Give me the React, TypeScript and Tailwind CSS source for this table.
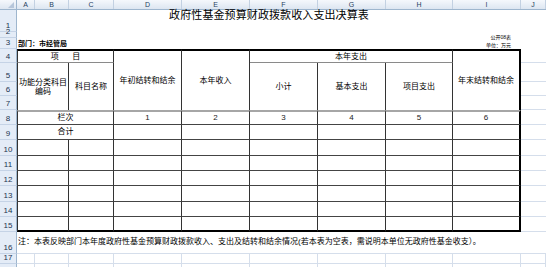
import React from "react";

const rowCls: Record<number, string> = {
  1: "row-[1]", 2: "row-[2]", 3: "row-[3]", 4: "row-[4]", 5: "row-[5]", 6: "row-[6]",
  7: "row-[7]", 8: "row-[8]", 9: "row-[9]", 10: "row-[10]", 11: "row-[11]", 12: "row-[12]",
  13: "row-[13]", 14: "row-[14]", 15: "row-[15]", 16: "row-[16]", 17: "row-[17]", 18: "row-[18]",
};
const colCls: Record<number, string> = {
  1: "col-[1]", 2: "col-[2]", 3: "col-[3]", 4: "col-[4]", 5: "col-[5]", 6: "col-[6]",
  7: "col-[7]", 8: "col-[8]", 9: "col-[9]", 10: "col-[10]", 11: "col-[11]",
};

const letters = ["A", "B", "C", "D", "E", "F", "G", "H", "I", "J"];

function Cell({ c, children }: { c: string; children?: React.ReactNode }) {
  return <div className={c}>{children}</div>;
}

export default function App() {
  const rows: number[] = [];
  for (let i = 1; i <= 18; i++) rows.push(i);

  const dataCols = [5, 6, 7, 8, 9, 10];
  const bodyRows = [10, 11, 12, 13, 14, 15];

  return (
    <div className="w-[546px] h-[267px] overflow-hidden bg-white text-black font-['Liberation_Sans','Noto_Sans_CJK_SC',sans-serif]">
      {/* column header */}
      <div className="grid h-[10px] grid-cols-[17px_18px_34px_45px_68px_68px_68px_68px_67px_68px_25px] bg-gradient-to-b from-[#f5f8fc] to-[#dde6f1] border-b border-b-[#9eb6ce]">
        <div className="relative border-r border-r-[#9eb6ce]">
          <div className="absolute right-[2px] bottom-[1px] w-0 h-0 border-l-[6px] border-l-transparent border-b-[6px] border-b-[#b6c6da]" />
        </div>
        {letters.map((l) => (
          <div
            key={l}
            className="flex items-center justify-center border-r border-r-[#c3d1e2] text-[7px] leading-none text-[#27415f]"
          >
            {l}
          </div>
        ))}
      </div>

      {/* body grid */}
      <div className="grid grid-cols-[17px_18px_34px_45px_68px_68px_68px_68px_67px_68px_25px] grid-rows-[22px_6px_11px_14px_19px_14px_14px_15px_15px_16px_15px_15px_16px_15px_15px_22px_10px_12px] text-[8px] leading-[10px]">
        {/* row headers */}
        {rows.map((r) => (
          <div
            key={"rh" + r}
            className={`col-[1] ${rowCls[r]} flex items-end justify-center bg-[#e4ecf7] border-r border-r-[#9eb6ce] border-b border-b-[#c5d3e6] pb-[1px] text-[8px] leading-[8px] text-[#22344f]`}
          >
            {r}
          </div>
        ))}

        {/* title */}
        <Cell c="col-[2/span_9] row-[1] flex justify-center items-start pt-[0px] text-[11px] leading-[11px] tracking-[0.1px]">
          政府性基金预算财政拨款收入支出决算表
        </Cell>

        {/* row 2 / 3 captions */}
        <Cell c="col-[10] row-[2] flex justify-end items-end pr-[10px] mb-[-2px] text-[5px] leading-[5px] whitespace-nowrap">
          公开08表
        </Cell>
        <Cell c="col-[2/span_4] row-[3] flex items-end pl-[1px] pb-[2px] text-[7px] leading-[7px] font-bold whitespace-nowrap">
          部门：市经管局
        </Cell>
        <Cell c="col-[10] row-[3] flex justify-end items-end pr-[10px] pb-[1px] text-[5px] leading-[5px] whitespace-nowrap">
          单位：万元
        </Cell>

        {/* header row 4 */}
        <Cell c="col-[2/span_3] row-[4] flex items-center justify-center border-t-2 border-t-black border-l border-l-[#333] border-r border-r-[#333] border-b border-b-[#8a8a8a] whitespace-pre">
          {"项      目"}
        </Cell>
        <Cell c="col-[5] row-[4/span_4] flex items-center justify-center border-t-2 border-t-black border-r border-r-[#333]">
          年初结转和结余
        </Cell>
        <Cell c="col-[6] row-[4/span_4] flex items-center justify-center border-t-2 border-t-black border-r border-r-[#333]">
          本年收入
        </Cell>
        <Cell c="col-[7/span_3] row-[4] flex items-center justify-center border-t-2 border-t-black border-r border-r-[#333] border-b border-b-[#8a8a8a]">
          本年支出
        </Cell>
        <Cell c="col-[10] row-[4/span_4] flex items-center justify-center border-t-2 border-t-black border-r-2 border-r-black">
          年末结转和结余
        </Cell>

        {/* header rows 5-7 */}
        <Cell c="col-[2/span_2] row-[5/span_3] flex flex-col items-center justify-center border-l border-l-[#333] border-r border-r-[#333] leading-[9px] pt-[1px]">
          <span>功能分类科目</span>
          <span>编码</span>
        </Cell>
        <Cell c="col-[4] row-[5/span_3] flex items-center justify-center border-r border-r-[#333]">
          科目名称
        </Cell>
        <Cell c="col-[7] row-[5/span_3] flex items-center justify-center border-r border-r-[#333]">
          小计
        </Cell>
        <Cell c="col-[8] row-[5/span_3] flex items-center justify-center border-r border-r-[#333]">
          基本支出
        </Cell>
        <Cell c="col-[9] row-[5/span_3] flex items-center justify-center border-r border-r-[#333]">
          项目支出
        </Cell>

        {/* row 8: 栏次 */}
        <Cell c="col-[2/span_3] row-[8] flex items-center justify-center border-t-2 border-t-[#a6a6a6] border-l border-l-[#333] border-r border-r-[#333] border-b border-b-[#444]">
          栏次
        </Cell>
        {dataCols.map((c, i) => (
          <Cell
            key={"n" + c}
            c={`${colCls[c]} row-[8] flex items-center justify-center border-t-2 border-t-[#a6a6a6] border-b border-b-[#444] ${
              c === 10 ? "border-r-2 border-r-black" : "border-r border-r-[#333]"
            } text-[#222]`}
          >
            {i + 1}
          </Cell>
        ))}

        {/* row 9: 合计 */}
        <Cell c="col-[2/span_3] row-[9] flex items-center justify-center border-l border-l-[#333] border-r border-r-[#333] border-b border-b-[#444]">
          合计
        </Cell>
        {dataCols.map((c) => (
          <Cell
            key={"h" + c}
            c={`${colCls[c]} row-[9] border-b border-b-[#444] ${
              c === 10 ? "border-r-2 border-r-black" : "border-r border-r-[#333]"
            }`}
          />
        ))}

        {/* rows 10-15 */}
        {bodyRows.map((r) => {
          const bottom = r === 15 ? "border-b-2 border-b-black" : "border-b border-b-[#444]";
          return (
            <React.Fragment key={"b" + r}>
              <Cell c={`col-[2/span_2] ${rowCls[r]} border-l border-l-[#333] border-r border-r-[#333] ${bottom}`} />
              <Cell c={`col-[4] ${rowCls[r]} border-r border-r-[#333] ${bottom}`} />
              {dataCols.map((c) => (
                <Cell
                  key={"bc" + r + "-" + c}
                  c={`${colCls[c]} ${rowCls[r]} ${bottom} ${
                    c === 10 ? "border-r-2 border-r-black" : "border-r border-r-[#333]"
                  }`}
                />
              ))}
            </React.Fragment>
          );
        })}

        {/* column J gridlines rows 4-16 */}
        {[4, 5, 6, 7, 8, 9, 10, 11, 12, 13, 14, 15].map((r) => (
          <Cell key={"j" + r} c={`col-[11] ${rowCls[r]} border-b border-b-[#d5deeb]`} />
        ))}

        {/* note row 16 */}
        <Cell c="col-[2/span_10] row-[16] flex items-center pl-[1px] pb-[1px] border-b border-b-[#d5deeb] whitespace-nowrap">
          注：本表反映部门本年度政府性基金预算财政拨款收入、支出及结转和结余情况(若本表为空表，需说明本单位无政府性基金收支）。
        </Cell>

        {/* rows 17-18 gridlines */}
        {[17, 18].map((r) => (
          <React.Fragment key={"g" + r}>
            {[2, 3, 4, 5, 6, 7, 8, 9, 10, 11].map((c) => (
              <Cell key={"g" + r + "-" + c} c={`${colCls[c]} ${rowCls[r]} border-r border-r-[#d5deeb] border-b border-b-[#d5deeb]`} />
            ))}
          </React.Fragment>
        ))}
      </div>
    </div>
  );
}
